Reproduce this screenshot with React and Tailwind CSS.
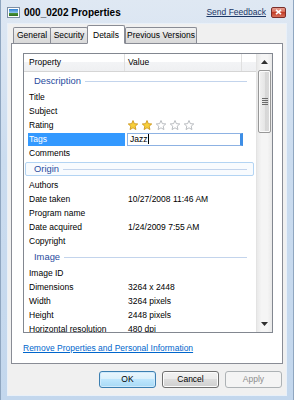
import React from "react";

const rows = [
  { g: "Description" },
  { p: "Title" },
  { p: "Subject" },
  { p: "Rating", stars: 2 },
  { p: "Tags", v: "Jazz", sel: true },
  { p: "Comments" },
  { g: "Origin", focus: true },
  { p: "Authors" },
  { p: "Date taken", v: "10/27/2008 11:46 AM" },
  { p: "Program name" },
  { p: "Date acquired", v: "1/24/2009 7:55 AM" },
  { p: "Copyright" },
  { g: "Image" },
  { p: "Image ID" },
  { p: "Dimensions", v: "3264 x 2448" },
  { p: "Width", v: "3264 pixels" },
  { p: "Height", v: "2448 pixels" },
  { p: "Horizontal resolution", v: "480 dpi" },
];

function Star({ filled }) {
  return (
    <svg width="12" height="11" viewBox="0 0 11 11" className="shrink-0">
      <polygon
        points="5.5,0.5 6.85,3.64 10.26,3.95 7.69,6.21 8.44,9.55 5.5,7.8 2.56,9.55 3.31,6.21 0.74,3.95 4.15,3.64"
        fill={filled ? "#f7cf3a" : "#ffffff"}
        stroke={filled ? "#c98f12" : "#a9adb3"}
        strokeWidth="0.8"
        strokeLinejoin="round"
      />
    </svg>
  );
}

function GroupRow({ label, focus }) {
  return (
    <div className="h-[18px] flex items-stretch pl-[1px] pr-[2px]">
      <div
        className={
          "flex-1 flex items-center rounded-[2px] border " +
          (focus ? "border-[#b3d4f3] bg-[#f8fbfe] my-[2px]" : "border-transparent")
        }
      >
        <span className="pl-[8px] text-[9.4px] text-[#2a4c9e]">{label}</span>
        <div className="flex-1 h-px bg-[#c3d4ec] ml-[4px] mr-[6px]" />
      </div>
    </div>
  );
}

function DataRow({ r }) {
  return (
    <div className="h-[14px] flex items-center text-[8.5px] text-black">
      <div className="w-[101px] h-full flex items-center shrink-0">
        {r.sel ? (
          <div className="ml-[4px] w-[97px] h-[13px] bg-[#3399ff] text-white flex items-center pl-[1px]">
            {r.p}
          </div>
        ) : (
          <span className="pl-[5px] whitespace-nowrap">{r.p}</span>
        )}
      </div>
      {r.stars !== undefined ? (
        <div className="flex items-center gap-[2px] pl-[2px]">
          {[0, 1, 2, 3, 4].map((i) => (
            <Star key={i} filled={i < r.stars} />
          ))}
        </div>
      ) : r.sel ? (
        <div className="ml-[2px] w-[116px] h-[13px] border border-[#8db2e3] border-r-[3px] border-r-[#3d8ee6] bg-white flex items-center pl-[2px]">
          <span>{r.v}</span>
          <span className="w-px h-[10px] bg-black ml-[1px]" />
        </div>
      ) : (
        <span className="pl-[3px] whitespace-nowrap">{r.v}</span>
      )}
    </div>
  );
}

function Tab({ label, selected, w }) {
  return selected ? (
    <div
      className={
        "h-[19px] -mb-px relative z-10 bg-white border border-[#898c95] border-b-white rounded-t-[2px] flex items-start justify-center pt-[3px] text-[8.5px] text-black " +
        w
      }
    >
      {label}
    </div>
  ) : (
    <div
      className={
        "h-[16px] mt-[2px] bg-[linear-gradient(#f3f3f3,#e2e2e2_50%,#d9d9d9)] border border-[#898c95] border-b-0 -ml-px first:ml-0 rounded-t-[2px] flex items-center justify-center text-[8.5px] text-black " +
        w
      }
    >
      {label}
    </div>
  );
}

function Button({ label, variant }) {
  const base =
    "w-[57px] h-[17px] rounded-[3px] flex items-center justify-center text-[8.5px] ";
  if (variant === "default")
    return (
      <div className={base + "border border-[#3c7fb1] bg-[linear-gradient(#eaf6fd,#d9f0fc_50%,#bee6fd_50%,#a7d9f5)] text-black shadow-[inset_0_0_0_1px_#cfeafc]"}>
        {label}
      </div>
    );
  if (variant === "disabled")
    return (
      <div className={base + "border border-[#adb2b5] bg-[#f4f4f4] text-[#8d8d8d]"}>{label}</div>
    );
  return (
    <div className={base + "border border-[#707070] bg-[linear-gradient(#f2f2f2,#ebebeb_50%,#dddddd_50%,#cfcfcf)] text-black shadow-[inset_0_0_0_1px_#fcfcfc]"}>
      {label}
    </div>
  );
}

export default function App() {
  return (
    <div className="w-[294px] h-[400px] flex flex-col bg-[linear-gradient(180deg,#dfe8f3,#cbdcef_40%,#c3d7ed)] border-x border-[#8fa6c0] font-['Liberation_Sans',Arial,sans-serif] overflow-hidden">
      {/* Title bar */}
      <div className="h-[24px] flex items-center shrink-0 pl-[7px] pr-[6px]">
        <div className="w-[11px] h-[9px] border border-white shadow-[0_0_0_1px_#7d8ea3] bg-[linear-gradient(#2f7fd0,#8fc4ee_55%,#4f9a3a_55%,#2f6e22)] mt-[1px]" />
        <span className="ml-[5px] text-[10px] font-bold text-black">000_0202 Properties</span>
        <div className="flex-1" />
        <span className="text-[8.5px] text-[#1b3766] underline mr-[5px]">Send Feedback</span>
        <div className="w-[15px] h-[11px] rounded-[2px] border border-[#7a2e2a] bg-[linear-gradient(#e8a093,#d4624f_50%,#c23d27_50%,#d8705c)] flex items-center justify-center mr-[1px]">
          <svg width="7" height="6" viewBox="0 0 7 6">
            <path d="M1 0.8 L6 5.2 M6 0.8 L1 5.2" stroke="white" strokeWidth="1.6" />
          </svg>
        </div>
      </div>

      {/* Body */}
      <div className="flex-1 mx-[7px] mb-[5px] bg-[#f0f0f0] shadow-[0_0_0_1px_#e9f0f8] flex flex-col px-[3px]">
        {/* Tabs */}
        <div className="flex items-end pl-[2px] pt-[1px] h-[19px] shrink-0">
          <Tab label="General" w="w-[38px]" />
          <Tab label="Security" w="w-[38px]" />
          <Tab label="Details" selected w="w-[38px] -ml-px" />
          <Tab label="Previous Versions" w="w-[72px] ml-0" />
        </div>

        {/* Panel */}
        <div className="h-[321px] bg-white border border-[#898c95] flex flex-col pl-[11px] pr-[9px] pt-[9px] shrink-0">
          {/* List view */}
          <div className="h-[280px] border border-[#828790] flex overflow-hidden shrink-0">
            <div className="flex-1 flex flex-col overflow-hidden">
              {/* Header */}
              <div className="h-[18px] shrink-0 flex bg-[linear-gradient(#ffffff,#ffffff_45%,#f3f4f6_45%,#eff0f2)] border-b border-[#d5d5d5] text-[8.5px] text-black">
                <div className="w-[101px] border-r border-[#e0e0e0] flex items-center pl-[5px]">Property</div>
                <div className="w-[117px] border-r border-[#e0e0e0] flex items-center pl-[3px]">Value</div>
                <div className="flex-1" />
              </div>
              <div className="flex-1 overflow-hidden">
                {rows.map((r, i) =>
                  r.g ? (
                    <GroupRow key={i} label={r.g} focus={r.focus} />
                  ) : (
                    <DataRow key={i} r={r} />
                  )
                )}
              </div>
            </div>
            {/* Scrollbar */}
            <div className="w-[16px] shrink-0 border-l border-[#e3e3e3] bg-[linear-gradient(90deg,#e9e9e9,#f5f5f5_30%,#f5f5f5_70%,#e9e9e9)] flex flex-col">
              <div className="h-[16px] flex items-center justify-center">
                <svg width="7" height="4" viewBox="0 0 7 4">
                  <path d="M0 4 L3.5 0 L7 4 Z" fill="#2f2f2f" />
                </svg>
              </div>
              <div className="h-[63px] mx-[1px] rounded-[2px] border border-[#989898] bg-[linear-gradient(90deg,#f2f2f2,#e6e6e6_50%,#d6d6d6_50%,#dadada)] shadow-[inset_0_0_0_1px_#fbfbfb] flex flex-col items-center justify-center gap-[1px]">
                <div className="w-[6px] h-px bg-[#6b6b6b]" />
                <div className="w-[6px] h-px bg-[#6b6b6b]" />
                <div className="w-[6px] h-px bg-[#6b6b6b]" />
                <div className="w-[6px] h-px bg-[#6b6b6b]" />
              </div>
              <div className="flex-1" />
              <div className="h-[16px] flex items-center justify-center">
                <svg width="7" height="4" viewBox="0 0 7 4">
                  <path d="M0 0 L3.5 4 L7 0 Z" fill="#2f2f2f" />
                </svg>
              </div>
            </div>
          </div>
          {/* Link */}
          <div className="mt-[9px] text-[8.5px] text-[#0066cc] underline">
            Remove Properties and Personal Information
          </div>
        </div>

        {/* Buttons */}
        <div className="flex-1 flex items-center justify-end gap-[6px] pr-[1px] pb-[1px]">
          <Button label="OK" variant="default" />
          <Button label="Cancel" />
          <Button label="Apply" variant="disabled" />
        </div>
      </div>
    </div>
  );
}
